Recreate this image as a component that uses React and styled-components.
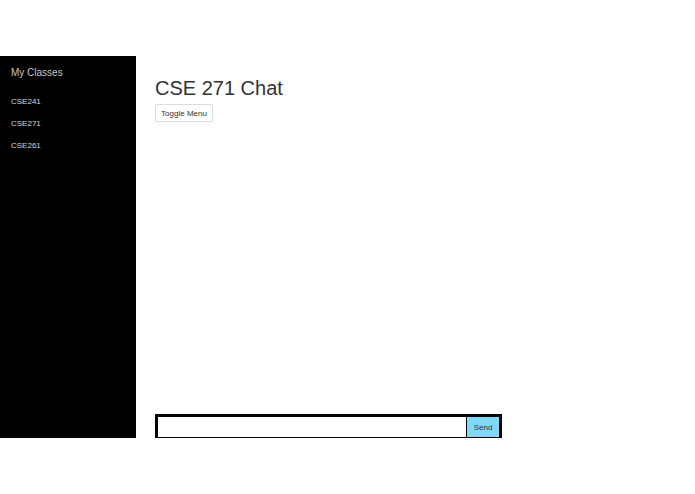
import React from "react";
import styled, { createGlobalStyle } from "styled-components";

const GlobalStyle = createGlobalStyle`
  html, body {
    margin: 0;
    padding: 0;
    background: #fff;
    font-family: "Liberation Sans", Arial, sans-serif;
  }
`;

const classes = ["CSE241", "CSE271", "CSE261"];

const App = () => {
  return (
    <>
      <GlobalStyle />
      <Page>
        <Sidebar>
          <SidebarTitle>My Classes</SidebarTitle>
          <ClassList>
            {classes.map((c) => (
              <ClassItem key={c}>{c}</ClassItem>
            ))}
          </ClassList>
        </Sidebar>
        <Main>
          <Title>CSE 271 Chat</Title>
          <ToggleButton>Toggle Menu</ToggleButton>
          <ChatBar>
            <ChatInput />
            <SendButton>Send</SendButton>
          </ChatBar>
        </Main>
      </Page>
    </>
  );
};

const Page = styled.div`
  display: flex;
  margin-top: 56px;
  height: 382px;
`;

const Sidebar = styled.nav`
  width: 136px;
  background: #000;
  padding: 11px 11px 0;
  box-sizing: border-box;
`;

const SidebarTitle = styled.div`
  color: #c8c8c8;
  font-size: 10px;
  line-height: 12px;
`;

const ClassList = styled.ul`
  list-style: none;
  margin: 18px 0 0;
  padding: 0;
  display: flex;
  flex-direction: column;
  gap: 12px;
`;

const ClassItem = styled.li`
  color: #d8d8d8;
  font-size: 8px;
  line-height: 10px;
`;

const Main = styled.main`
  flex: 1;
  display: flex;
  flex-direction: column;
  align-items: flex-start;
  padding-left: 19px;
`;

const Title = styled.h1`
  margin: 20px 0 0;
  font-size: 20px;
  font-weight: normal;
  line-height: 24px;
  color: #333;
`;

const ToggleButton = styled.button`
  margin-top: 4px;
  height: 18px;
  width: 58px;
  padding: 0;
  background: #fff;
  border: 1px solid #ddd;
  border-radius: 2px;
  font-family: "Liberation Sans", Arial, sans-serif;
  font-size: 8px;
  color: #333;
`;

const ChatBar = styled.div`
  margin-top: auto;
  display: flex;
  width: 347px;
  height: 24px;
  box-sizing: border-box;
  border: 3px solid #000;
  border-bottom-width: 1px;
  background: #000;
`;

const ChatInput = styled.input`
  flex: 1;
  min-width: 0;
  border: none;
  padding: 0 4px;
  margin: 0 1px 0 0;
  background: #fff;
  outline: none;
`;

const SendButton = styled.button`
  width: 32px;
  padding: 0;
  border: none;
  background: #80d8f8;
  font-family: "Liberation Sans", Arial, sans-serif;
  font-size: 8px;
  color: #333;
`;

export default App;
